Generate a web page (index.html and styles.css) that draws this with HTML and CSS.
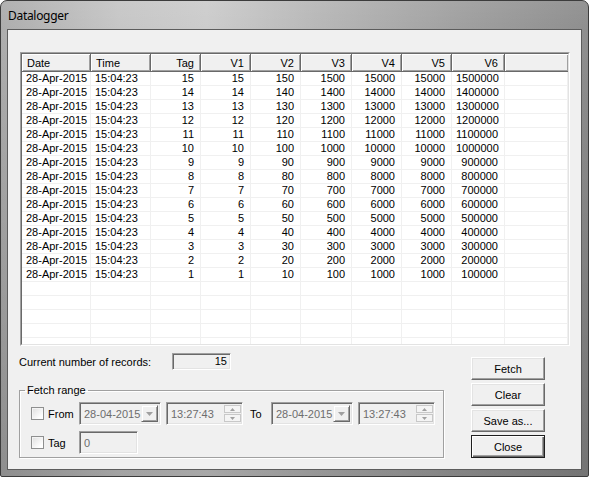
FILE: index.html
```html
<!DOCTYPE html>
<html lang="en">

<head>
    <meta charset="UTF-8">
    <title>Datalogger</title>
    <link rel="stylesheet" href="styles.css">
</head>

<body>
    <div class="window">
        <div class="titlebar">Datalogger</div>

        <div class="client">
            <div class="listview">
                <div class="listview-inner">
                    <table class="grid">
                        <colgroup>
                            <col style="width:69px">
                            <col style="width:60px">
                            <col style="width:50px">
                            <col style="width:50px">
                            <col style="width:50px">
                            <col style="width:51px">
                            <col style="width:50px">
                            <col style="width:50px">
                            <col style="width:53px">
                            <col>
                        </colgroup>
                        <thead>
                            <tr>
                                <th class="left">Date</th>
                                <th class="left">Time</th>
                                <th>Tag</th>
                                <th>V1</th>
                                <th>V2</th>
                                <th>V3</th>
                                <th>V4</th>
                                <th>V5</th>
                                <th>V6</th>
                                <th></th>
                            </tr>
                        </thead>
                        <tbody>
                            <tr><td class="left">28-Apr-2015</td><td class="left">15:04:23</td><td>15</td><td>15</td><td>150</td><td>1500</td><td>15000</td><td>15000</td><td>1500000</td><td></td></tr>
                            <tr><td class="left">28-Apr-2015</td><td class="left">15:04:23</td><td>14</td><td>14</td><td>140</td><td>1400</td><td>14000</td><td>14000</td><td>1400000</td><td></td></tr>
                            <tr><td class="left">28-Apr-2015</td><td class="left">15:04:23</td><td>13</td><td>13</td><td>130</td><td>1300</td><td>13000</td><td>13000</td><td>1300000</td><td></td></tr>
                            <tr><td class="left">28-Apr-2015</td><td class="left">15:04:23</td><td>12</td><td>12</td><td>120</td><td>1200</td><td>12000</td><td>12000</td><td>1200000</td><td></td></tr>
                            <tr><td class="left">28-Apr-2015</td><td class="left">15:04:23</td><td>11</td><td>11</td><td>110</td><td>1100</td><td>11000</td><td>11000</td><td>1100000</td><td></td></tr>
                            <tr><td class="left">28-Apr-2015</td><td class="left">15:04:23</td><td>10</td><td>10</td><td>100</td><td>1000</td><td>10000</td><td>10000</td><td>1000000</td><td></td></tr>
                            <tr><td class="left">28-Apr-2015</td><td class="left">15:04:23</td><td>9</td><td>9</td><td>90</td><td>900</td><td>9000</td><td>9000</td><td>900000</td><td></td></tr>
                            <tr><td class="left">28-Apr-2015</td><td class="left">15:04:23</td><td>8</td><td>8</td><td>80</td><td>800</td><td>8000</td><td>8000</td><td>800000</td><td></td></tr>
                            <tr><td class="left">28-Apr-2015</td><td class="left">15:04:23</td><td>7</td><td>7</td><td>70</td><td>700</td><td>7000</td><td>7000</td><td>700000</td><td></td></tr>
                            <tr><td class="left">28-Apr-2015</td><td class="left">15:04:23</td><td>6</td><td>6</td><td>60</td><td>600</td><td>6000</td><td>6000</td><td>600000</td><td></td></tr>
                            <tr><td class="left">28-Apr-2015</td><td class="left">15:04:23</td><td>5</td><td>5</td><td>50</td><td>500</td><td>5000</td><td>5000</td><td>500000</td><td></td></tr>
                            <tr><td class="left">28-Apr-2015</td><td class="left">15:04:23</td><td>4</td><td>4</td><td>40</td><td>400</td><td>4000</td><td>4000</td><td>400000</td><td></td></tr>
                            <tr><td class="left">28-Apr-2015</td><td class="left">15:04:23</td><td>3</td><td>3</td><td>30</td><td>300</td><td>3000</td><td>3000</td><td>300000</td><td></td></tr>
                            <tr><td class="left">28-Apr-2015</td><td class="left">15:04:23</td><td>2</td><td>2</td><td>20</td><td>200</td><td>2000</td><td>2000</td><td>200000</td><td></td></tr>
                            <tr><td class="left">28-Apr-2015</td><td class="left">15:04:23</td><td>1</td><td>1</td><td>10</td><td>100</td><td>1000</td><td>1000</td><td>100000</td><td></td></tr>
                            <tr><td></td><td></td><td></td><td></td><td></td><td></td><td></td><td></td><td></td><td></td></tr>
                            <tr><td></td><td></td><td></td><td></td><td></td><td></td><td></td><td></td><td></td><td></td></tr>
                            <tr><td></td><td></td><td></td><td></td><td></td><td></td><td></td><td></td><td></td><td></td></tr>
                            <tr><td></td><td></td><td></td><td></td><td></td><td></td><td></td><td></td><td></td><td></td></tr>
                            <tr><td></td><td></td><td></td><td></td><td></td><td></td><td></td><td></td><td></td><td></td></tr>
                        </tbody>
                    </table>
                </div>
            </div>

            <div class="bottom">
                <div class="left-col">
                    <div class="records">
                        <span class="records-label">Current number of records:</span>
                        <div class="sunken records-value">15</div>
                    </div>

                    <fieldset class="group">
                        <legend>Fetch range</legend>
                        <div class="range-row">
                            <span class="check"></span>
                            <span class="lbl">From</span>
                            <div class="sunken combo">
                                <span class="value">28-04-2015</span>
                                <span class="drop">
                                    <svg width="7" height="4" viewBox="0 0 7 4"><path d="M0 0h7L3.5 4z" fill="#a0a0a0"/></svg>
                                </span>
                            </div>
                            <div class="sunken spin-edit">
                                <span class="value">13:27:43</span>
                                <span class="spin">
                                    <span class="spin-btn">
                                        <svg width="5" height="3" viewBox="0 0 5 3"><path d="M0 3h5L2.5 0z" fill="#a0a0a0"/></svg>
                                    </span>
                                    <span class="spin-btn">
                                        <svg width="5" height="3" viewBox="0 0 5 3"><path d="M0 0h5L2.5 3z" fill="#a0a0a0"/></svg>
                                    </span>
                                </span>
                            </div>
                            <span class="lbl to">To</span>
                            <div class="sunken combo">
                                <span class="value">28-04-2015</span>
                                <span class="drop">
                                    <svg width="7" height="4" viewBox="0 0 7 4"><path d="M0 0h7L3.5 4z" fill="#a0a0a0"/></svg>
                                </span>
                            </div>
                            <div class="sunken spin-edit">
                                <span class="value">13:27:43</span>
                                <span class="spin">
                                    <span class="spin-btn">
                                        <svg width="5" height="3" viewBox="0 0 5 3"><path d="M0 3h5L2.5 0z" fill="#a0a0a0"/></svg>
                                    </span>
                                    <span class="spin-btn">
                                        <svg width="5" height="3" viewBox="0 0 5 3"><path d="M0 0h5L2.5 3z" fill="#a0a0a0"/></svg>
                                    </span>
                                </span>
                            </div>
                        </div>
                        <div class="range-row">
                            <span class="check"></span>
                            <span class="lbl">Tag</span>
                            <div class="sunken tag-edit"><span class="value">0</span></div>
                        </div>
                    </fieldset>
                </div>

                <div class="buttons">
                    <button class="btn">Fetch</button>
                    <button class="btn">Clear</button>
                    <button class="btn">Save as...</button>
                    <button class="btn default">Close</button>
                </div>
            </div>
        </div>
    </div>
</body>

</html>
```

FILE: styles.css
```css
body {
    margin: 0;
    background: #fff;
    font-family: "Liberation Sans", Arial, sans-serif;
    font-size: 11px;
    color: #000;
}

.window {
    width: 589px;
    height: 477px;
    box-sizing: border-box;
    display: flex;
    flex-direction: column;
    border: 1px solid #3c3c3c;
    border-radius: 7px 7px 2px 2px;
    overflow: hidden;
    background:
        linear-gradient(180deg, rgba(255, 255, 255, 0.06) 0, rgba(0, 0, 0, 0) 30px, rgba(0, 0, 0, 0.18) 100%),
        linear-gradient(90deg, #adadad 0%, #c6c6c6 20%, #cccccc 35%, #b6b6b6 55%, #9e9e9e 80%, #8e8e8e 100%);
}

.titlebar {
    height: 28px;
    line-height: 30px;
    padding-left: 7px;
    font-family: "Noto Sans", "Liberation Sans", sans-serif;
    font-size: 12px;
    letter-spacing: -0.3px;
    color: #000;
}

.client {
    flex: 1;
    margin: 0 6px 6px;
    padding-top: 22px;
    border: 1px solid #5c5c5c;
    background: #f0f0f0;
}

/* list view */

.listview {
    width: 550px;
    height: 294px;
    margin-left: 12px;
    box-sizing: border-box;
    border: 1px solid;
    border-color: #a0a0a0 #fff #fff #a0a0a0;
}

.listview-inner {
    height: 100%;
    box-sizing: border-box;
    border: 1px solid;
    border-color: #696969 #e3e3e3 #e3e3e3 #696969;
    background: #fff;
    overflow: hidden;
}

.grid {
    width: 546px;
    table-layout: fixed;
    border-collapse: separate;
    border-spacing: 0;
}

.grid th {
    box-sizing: border-box;
    height: 18px;
    padding: 0 6px 0 5px;
    font-weight: normal;
    text-align: right;
    white-space: nowrap;
    background: #f0f0f0;
    border-right: 1px solid #696969;
    border-bottom: 1px solid #696969;
    box-shadow: inset 1px 1px #fff, inset -1px -1px #a0a0a0;
}

.grid th:last-child {
    border-right: none;
}

.grid td {
    box-sizing: border-box;
    height: 14px;
    padding: 0 6px 0 4px;
    line-height: 13px;
    text-align: right;
    white-space: nowrap;
    border-right: 1px solid #f0f0f0;
    border-bottom: 1px solid #f0f0f0;
}

.grid .left {
    text-align: left;
}

/* bottom area */

.bottom {
    display: flex;
    margin-top: 7px;
    padding-left: 11px;
}

.left-col {
    width: 452px;
}

.records {
    display: flex;
    align-items: center;
    height: 17px;
}

.records-label {
    width: 153px;
}

.sunken {
    box-sizing: border-box;
    border: 1px solid;
    border-color: #a0a0a0 #fff #fff #a0a0a0;
    box-shadow: inset 1px 1px #696969, inset -1px -1px #e3e3e3;
    background: #f0f0f0;
}

.records-value {
    width: 59px;
    height: 17px;
    padding-right: 3px;
    line-height: 15px;
    text-align: right;
}

.group {
    width: 425px;
    box-sizing: border-box;
    margin: 14px 0 0;
    padding: 5px 0 3px 11px;
    border: 1px solid #a0a0a0;
    box-shadow: 1px 1px 0 #fff, inset 1px 1px 0 #fff;
}

.group legend {
    margin-left: -6px;
    padding: 0 2px;
    line-height: 13px;
}

.range-row {
    display: flex;
    align-items: center;
    height: 23px;
}

.range-row + .range-row {
    margin-top: 6px;
}

.check {
    width: 13px;
    height: 13px;
    box-sizing: border-box;
    margin-right: 4px;
    border: 1px solid #8e8f8f;
    background: linear-gradient(135deg, #dedede, #fff 80%);
    box-shadow: inset 1px 1px #f4f4f4;
}

.lbl {
    width: 31px;
}

.lbl.to {
    width: 21px;
    padding-left: 7px;
}

.value {
    flex: 1;
    padding-left: 2px;
    color: #6d6d6d;
    line-height: 19px;
}

.combo {
    display: flex;
    width: 82px;
    height: 23px;
    padding: 2px;
}

.drop {
    display: flex;
    align-items: center;
    justify-content: center;
    width: 17px;
    box-sizing: border-box;
    border: 1px solid;
    border-color: #f0f0f0 #696969 #696969 #f0f0f0;
    box-shadow: inset 1px 1px #fff, inset -1px -1px #a0a0a0;
    background: #f0f0f0;
}

.spin-edit {
    display: flex;
    width: 77px;
    height: 23px;
    margin-left: 5px;
    padding: 2px 1px 2px 2px;
}

.spin {
    display: flex;
    flex-direction: column;
    width: 17px;
    gap: 1px;
}

.spin-btn {
    flex: 1;
    display: flex;
    align-items: center;
    justify-content: center;
    box-sizing: border-box;
    border: 1px solid #c8c8c8;
    background: #f4f4f4;
}

.tag-edit {
    display: flex;
    width: 59px;
    height: 23px;
    padding: 2px;
}

/* buttons */

.buttons {
    display: flex;
    flex-direction: column;
    gap: 3px;
    margin-top: 4px;
}

.btn {
    width: 74px;
    height: 23px;
    box-sizing: border-box;
    padding: 0;
    font-family: "Liberation Sans", Arial, sans-serif;
    font-size: 11px;
    color: #000;
    background: #f0f0f0;
    border: 1px solid;
    border-color: #fff #696969 #696969 #fff;
    box-shadow: inset -1px -1px #a0a0a0, inset 1px 1px #e3e3e3;
}

.btn.default {
    border: 1px solid #1e1e1e;
    box-shadow: inset 1px 1px #fff, inset -1px -1px #696969, inset -2px -2px #a0a0a0;
}
```
